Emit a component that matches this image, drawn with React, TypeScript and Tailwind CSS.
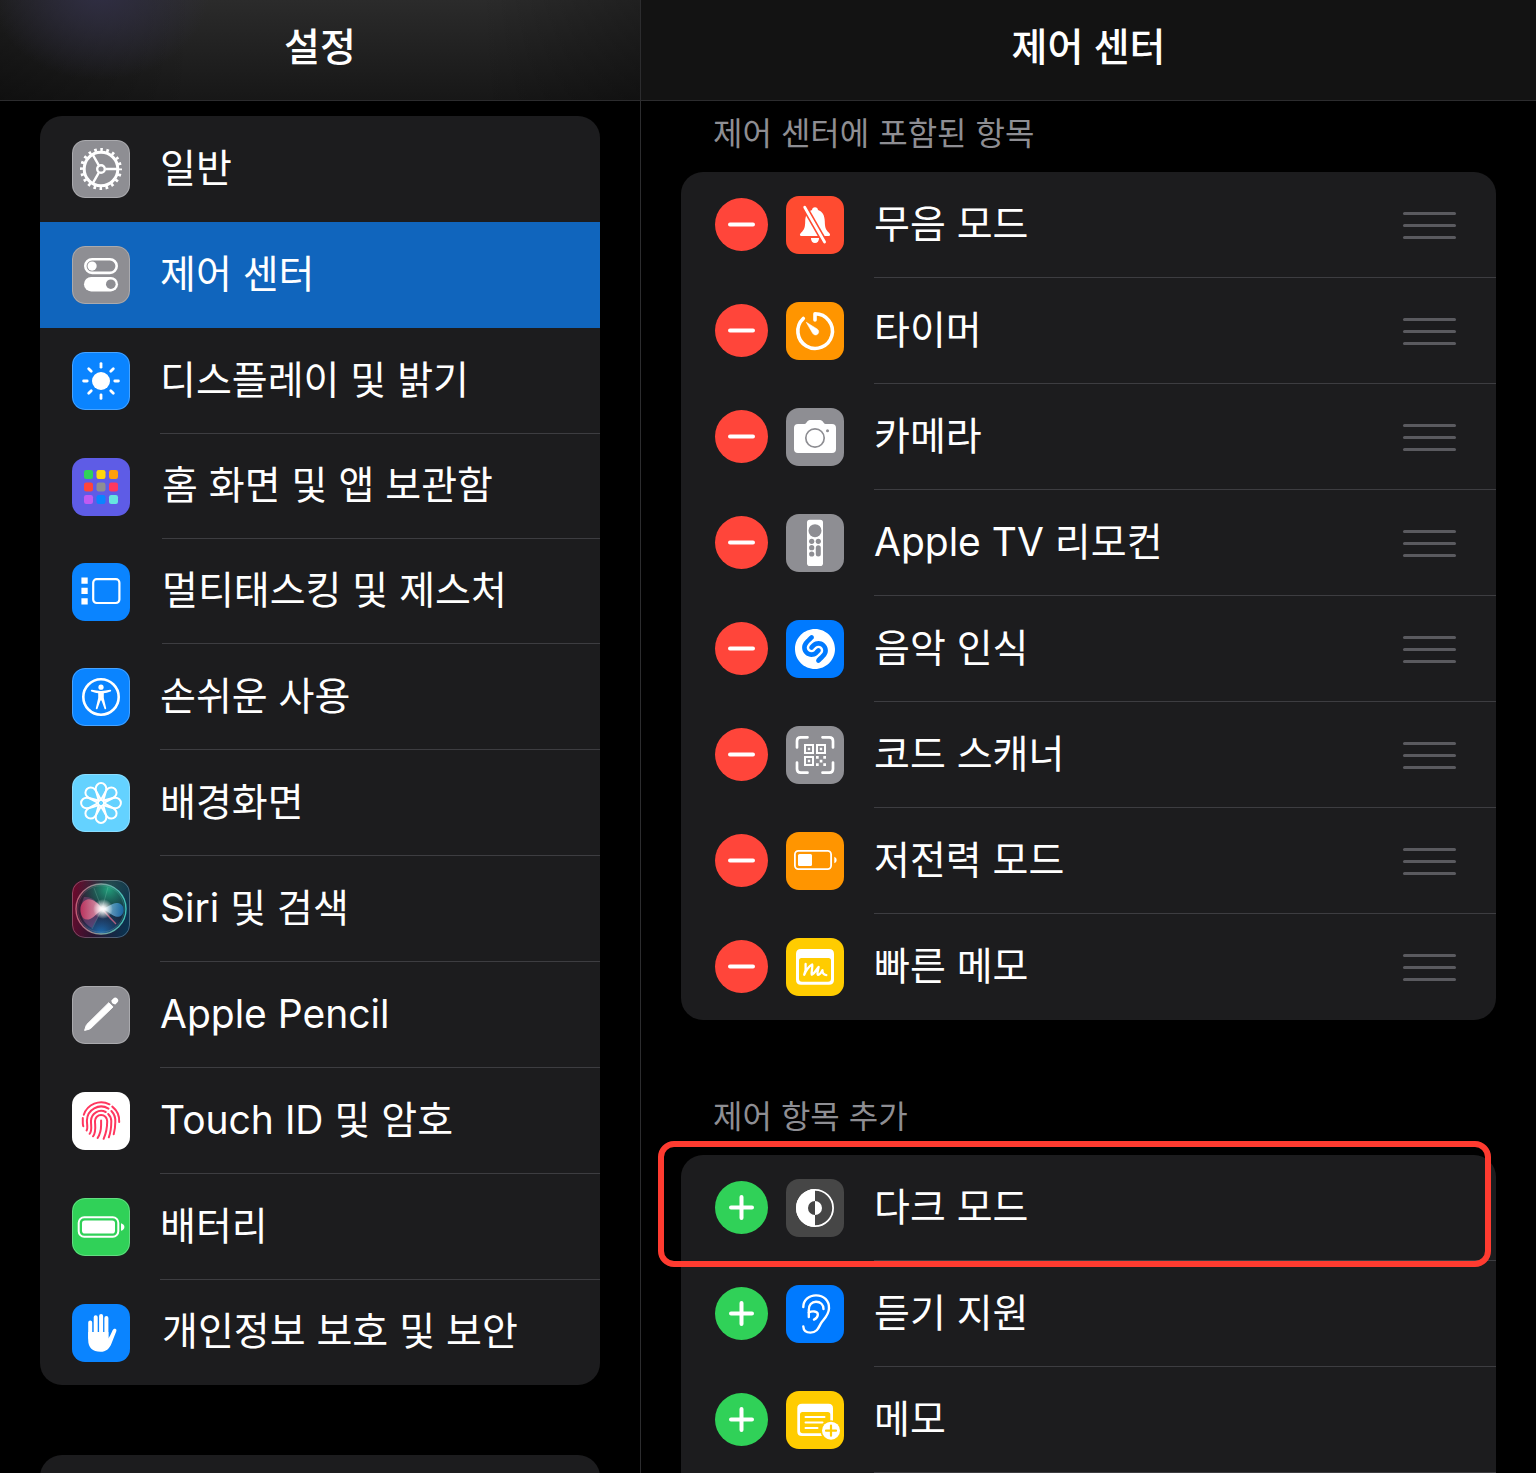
import clsx from "clsx"
import { ReactNode } from "react"
import { SiShazam } from "react-icons/si"

type Item = {
  title: string
  icon: ReactNode
  color: string
}

const Glyph = ({ children }: { children: ReactNode }) => (
  <svg viewBox="0 0 58 58" className="size-full" fill="none" aria-hidden="true">
    {children}
  </svg>
)

const GearIcon = () => (
  <Glyph>
    <g stroke="#fff">
      <circle cx="29" cy="29" r="16.8" strokeWidth="3" />
      <circle
        cx="29"
        cy="29"
        r="19.4"
        strokeWidth="3.2"
        strokeDasharray="2.6 3.495"
        strokeDashoffset="1.3"
      />
      <circle cx="29" cy="29" r="3.8" strokeWidth="2.4" />
      <path
        d="M33.5 29H45M26.7 25.1L21 15.2M26.7 32.9L21 42.8"
        strokeWidth="2.4"
      />
    </g>
  </Glyph>
)

const SwitchesIcon = () => (
  <Glyph>
    <rect x="13.3" y="13.3" width="31.4" height="13.6" rx="6.8" stroke="#fff" strokeWidth="2.6" />
    <circle cx="20.1" cy="20.1" r="4.6" fill="#fff" />
    <rect x="12" y="31" width="34" height="14.4" rx="7.2" fill="#fff" />
    <circle cx="38.8" cy="38.2" r="4.8" fill="#8e8e93" />
  </Glyph>
)

const SunIcon = () => (
  <Glyph>
    <circle cx="29" cy="29" r="9" fill="#fff" />
    <g stroke="#fff" strokeWidth="2.8" strokeLinecap="round">
      {[0, 45, 90, 135, 180, 225, 270, 315].map((angle) => (
        <path key={angle} d="M29 15.2V11.6" transform={`rotate(${angle} 29 29)`} />
      ))}
    </g>
  </Glyph>
)

const gridColors = [
  "#30d158", "#ffd60a", "#ff9f0a",
  "#ff453a", "#8e8e93", "#ff375f",
  "#bf5af2", "#0a84ff", "#66e5e0",
]

const HomeGridIcon = () => (
  <Glyph>
    {gridColors.map((color, i) => (
      <rect
        key={color}
        x={12 + (i % 3) * 12.5}
        y={12 + Math.floor(i / 3) * 12.5}
        width="9"
        height="9"
        rx="2.2"
        fill={color}
      />
    ))}
  </Glyph>
)

const MultitaskIcon = () => (
  <Glyph>
    <path d="M9.4 14.4h6.3v6.3H9.4zM9.4 24.8h6.3v6.3H9.4zM9.4 35.3h6.3v6.3H9.4z" fill="#fff" />
    <rect x="21.2" y="16.2" width="26.2" height="23.8" rx="3.5" stroke="#fff" strokeWidth="2.2" />
  </Glyph>
)

const AccessibilityIcon = () => (
  <Glyph>
    <circle cx="29" cy="29" r="17.7" stroke="#fff" strokeWidth="2.6" />
    <circle cx="29" cy="19.2" r="2.6" fill="#fff" />
    <path
      d="M20 21.8Q29 24 38 21.8a.9.9 0 0 1 .5 1.8Q34.5 25 31.8 25.3V30L34.2 40.2a.9.9 0 0 1-1.7.5L29.5 32.5h-1L25.5 40.7a.9.9 0 0 1-1.7-.5L26.2 30V25.3Q23.5 25 19.5 23.6a.9.9 0 0 1 .5-1.8Z"
      fill="#fff"
    />
  </Glyph>
)

const FlowerIcon = () => (
  <Glyph>
    <g stroke="#fff" strokeWidth="2">
      {[0, 45, 90, 135, 180, 225, 270, 315].map((angle) => (
        <path
          key={angle}
          d="M26.8 27.6C26 22 23.7 18.5 23.7 14.6a5.3 5.5 0 0 1 10.6 0C34.3 18.5 32 22 31.2 27.6"
          transform={`rotate(${angle} 29 29)`}
        />
      ))}
      <circle cx="29" cy="29" r="3" strokeWidth="1.6" />
    </g>
  </Glyph>
)

const SiriIcon = () => (
  <Glyph>
    <defs>
      <linearGradient id="siri-bg" x1="0" y1=".4" x2="1" y2=".6">
        <stop offset="0" stopColor="#6a0a2c" />
        <stop offset=".45" stopColor="#2a1430" />
        <stop offset="1" stopColor="#0a3350" />
      </linearGradient>
      <radialGradient id="siri-green" cx=".65" cy=".1" r=".6">
        <stop offset="0" stopColor="#23a07c" />
        <stop offset="1" stopColor="#0f5a50" stopOpacity="0" />
      </radialGradient>
      <radialGradient id="siri-blue" cx=".5" cy="1" r=".5">
        <stop offset="0" stopColor="#1c6fb5" />
        <stop offset="1" stopColor="#1c4f85" stopOpacity="0" />
      </radialGradient>
      <linearGradient id="siri-ring" x1="0" y1=".5" x2="1" y2=".5">
        <stop offset="0" stopColor="#c05a74" />
        <stop offset=".5" stopColor="#7f9f9c" />
        <stop offset="1" stopColor="#3fc3b8" />
      </linearGradient>
      <linearGradient id="siri-pink" x1="0" y1="0" x2="1" y2="0">
        <stop offset="0" stopColor="#d8345f" />
        <stop offset="1" stopColor="#ffc4d2" />
      </linearGradient>
      <linearGradient id="siri-sky" x1="0" y1="0" x2="1" y2="0">
        <stop offset="0" stopColor="#c4f1ff" />
        <stop offset="1" stopColor="#1778c8" />
      </linearGradient>
      <radialGradient id="siri-glow">
        <stop offset="0" stopColor="#fff" />
        <stop offset=".25" stopColor="#fff" stopOpacity=".9" />
        <stop offset="1" stopColor="#fff" stopOpacity="0" />
      </radialGradient>
    </defs>
    <rect width="58" height="58" fill="url(#siri-bg)" />
    <rect width="58" height="58" fill="url(#siri-green)" opacity=".4" />
    <circle cx="29" cy="29" r="25" fill="#1b2a3c" fillOpacity=".5" />
    <circle cx="29" cy="29" r="25" fill="url(#siri-green)" />
    <circle cx="29" cy="29" r="25" fill="url(#siri-blue)" />
    <path d="M12 17C20 16 26 22 30 29C26 38 22 44 20 48C12 44 8 36 8.5 27Z" fill="#8a4a80" opacity=".5" />
    <path
      d="M31 29C25 22 20 18 15 19.5C9 21.5 7.5 28 9 34C11 41 17 41 22 36.5C25 34 28 31 31 29Z"
      fill="url(#siri-pink)"
      opacity=".75"
    />
    <path
      d="M30 29C37 27 40 22.5 45.5 23C50 23.5 52 27 51.5 31C51 35.5 47.5 37.5 43.5 36.5C39 35 36 31 30 29Z"
      fill="url(#siri-sky)"
      opacity=".7"
    />
    <path d="M31 30L44 44L38 38Z" stroke="#d06a8a" strokeWidth="1.2" opacity=".8" />
    <path d="M30 29L22 8M30 29L36 7M30 29L20 49" stroke="#9fe0d0" strokeWidth=".6" opacity=".35" />
    <circle cx="31" cy="29" r="10" fill="url(#siri-glow)" />
    <circle cx="29" cy="29" r="25" stroke="url(#siri-ring)" strokeWidth="1.4" />
    <circle cx="29" cy="29" r="23.3" stroke="url(#siri-ring)" strokeWidth=".5" opacity=".6" />
  </Glyph>
)

const PencilIcon = () => (
  <Glyph>
    <path
      d="M12.6 44.4L14.2 39.6Q14.5 38.9 15 38.3L36.8 16.7L41 20.9L18.8 42.3Q18.2 42.8 17.5 43.1Z"
      fill="#fff"
      stroke="#fff"
      strokeWidth="1"
      strokeLinejoin="round"
    />
    <path d="M39.3 14.4L41.3 12.4a2.8 2.8 0 0 1 4 4L43.3 18.4L41.7 18Q39.9 17.5 39.6 16Z" fill="#fff" />
  </Glyph>
)

const FingerprintIcon = () => (
  <Glyph>
    <g stroke="#ff375f" strokeWidth="2" strokeLinecap="round">
      <path d="M10.8 26V31.5Q10.900 33 11.300 34.300" />
      <path d="M11.800 22.800A18.300 18.300 0 0 1 37.500 12.300" />
      <path d="M40.300 14.600A18.300 18.300 0 0 1 47.200 30" />
      <path d="M14.600 38.500C16.200 36 14.800 32 14.900 28.500A14.200 14.200 0 0 1 36.500 16.600" />
      <path d="M39.400 19A14.300 14.300 0 0 1 43.300 30C43.300 34.500 42.900 38 41.700 42.300" />
      <path d="M17.600 41.800C20.600 38.500 18.700 32.500 19 28.800A10.200 10.200 0 0 1 33.700 20" />
      <path d="M36.200 22A10.200 10.200 0 0 1 39.300 29C39.300 35 38.800 40 36.800 45.300" />
      <path d="M21 44.300C24.700 40 22.900 33 23 29A6.100 6.100 0 0 1 35.200 29C35.200 36 34.500 40.500 31.600 46.800" />
      <path d="M29.100 28.500V33C29.100 38 28.200 42 25.600 46" />
    </g>
  </Glyph>
)

const BatteryIcon = () => (
  <Glyph>
    <rect x="6.7" y="19.3" width="39.6" height="19.4" rx="5.5" stroke="#fff" strokeWidth="2" />
    <rect x="10" y="22.6" width="33" height="13" rx="2.8" fill="#fff" />
    <path d="M49 25.2Q52.4 26.3 52.4 29T49 32.8Z" fill="#fff" />
  </Glyph>
)

const HandIcon = () => (
  <Glyph>
    <path
      d="M18.2 18.500V34M23.7 13.2V32M29.1 12V32M34.4 14V34"
      stroke="#fff"
      strokeWidth="4"
      strokeLinecap="round"
    />
    <path
      d="M16.2 28H36.4V34.5C37.5 33 39 30 40.5 26.5C41.3 24.8 42.3 24.5 43.3 24.8C44.5 25.2 44.7 26.3 44.2 27.6L39.5 39.5C37.3 45 34 47.8 28.5 47.8C20.5 47.8 16.2 43.5 16.2 36Z"
      fill="#fff"
    />
  </Glyph>
)

const BellSlashIcon = () => (
  <Glyph>
    <path
      d="M29 11.3C27.3 11.3 26.2 12.4 26 14C21.5 15.5 19.3 19.5 19.2 25.5C19.1 31.5 18.3 33.8 15 36.7C13.4 38.2 13.5 40 15.5 40H42.5C44.5 40 44.6 38.2 43 36.7C39.7 33.8 38.9 31.5 38.8 25.5C38.7 19.5 36.5 15.5 32 14C31.8 12.4 30.7 11.3 29 11.3ZM24.9 41.9H33.1C33 45 31.5 47 29 47S25 45 24.9 41.9Z"
      fill="#fff"
    />
    <path d="M18.7 11.3L38.6 46" stroke="#ff4b30" strokeWidth="6" />
    <path d="M18.7 11.3L38.6 46" stroke="#fff" strokeWidth="2.8" strokeLinecap="round" />
  </Glyph>
)

const TimerIcon = () => (
  <Glyph>
    <path
      d="M29 18V11.8A17.3 17.3 0 1 1 17.3 16.5"
      stroke="#fff"
      strokeWidth="3.6"
      strokeLinecap="round"
      strokeLinejoin="round"
    />
    <path d="M20.3 20.3L31 26.9A3.2 3.2 0 1 1 26.7 31.3Z" fill="#fff" stroke="#fff" strokeWidth=".6" strokeLinejoin="round" />
  </Glyph>
)

const CameraIcon = () => (
  <Glyph>
    <path
      d="M12 16H18.5C20.5 16 21 12 24 12H34C37 12 37.5 16 39.5 16H46Q50 16 50 20V41Q50 45 46 45H12Q8 45 8 41V20Q8 16 12 16Z"
      fill="#fff"
    />
    <circle cx="29" cy="30" r="9.2" stroke="#8e8e93" strokeWidth="1.7" />
    <circle cx="41.5" cy="22.7" r="1.5" fill="#8e8e93" />
  </Glyph>
)

const RemoteIcon = () => (
  <Glyph>
    <rect x="21" y="5.8" width="16" height="46.2" rx="2.8" fill="#fff" />
    <g fill="#8e8e93">
      <circle cx="29" cy="16.7" r="6.5" />
      <circle cx="25.7" cy="27.3" r="2.6" />
      <circle cx="32.3" cy="27.3" r="2.6" />
      <circle cx="25.7" cy="33.7" r="2.6" />
      <circle cx="25.7" cy="40" r="2.6" />
      <rect x="29.8" y="31.2" width="5" height="11.4" rx="2.5" />
    </g>
  </Glyph>
)

const ShazamIcon = () => <SiShazam className="size-10 text-white" />

const ScannerIcon = () => (
  <Glyph>
    <path
      d="M11 21.5V15Q11 11.3 14.7 11.3H21.5M36.5 11.3H43.3Q47 11.3 47 15V21.5M47 36.5V43Q47 46.7 43.3 46.7H36.5M21.5 46.7H14.7Q11 46.7 11 43V36.5"
      stroke="#fff"
      strokeWidth="2.7"
      strokeLinecap="round"
    />
    <path d="M19 19h8v8h-8zM31 19h8v8h-8zM19 31h8v8h-8z" stroke="#fff" strokeWidth="2" />
    <path
      d="M21.8 21.8h2.4v2.4h-2.4zM33.8 21.8h2.4v2.4h-2.4zM21.8 33.8h2.4v2.4h-2.4zM30 30h2.7v2.7h-2.7zM37.3 30H40v2.7h-2.7zM33.7 33.7h2.7v2.7h-2.7zM30 37.3h2.7V40h-2.7zM37.3 37.3H40V40h-2.7z"
      fill="#fff"
    />
  </Glyph>
)

const LowPowerIcon = () => (
  <Glyph>
    <rect x="8.9" y="18.9" width="36.2" height="18.2" rx="3.5" stroke="#fff" strokeWidth="1.8" />
    <rect x="12" y="22" width="14" height="12" rx="1.5" fill="#fff" />
    <path d="M48.3 24.7Q50.7 25.5 50.7 28T48.3 31.3Z" fill="#fff" />
  </Glyph>
)

const QuickNoteIcon = () => (
  <Glyph>
    <path
      d="M15 11H43Q48 11 48 16V41.7Q48 46.7 43 46.7H15Q10 46.7 10 41.7V16Q10 11 15 11ZM15.5 20Q13 20 13 22.5V40.5Q13 43.7 16 43.7H42Q45 43.7 45 40.5V22.5Q45 20 42.5 20Z"
      fill="#fff"
      fillRule="evenodd"
    />
    <path
      d="M19.6 25.8C20 29.500 19.6 33.500 18.2 36.8C20 32.500 22.8 28.4 26.2 26.500C27 29.500 25 33.500 25.8 36.6C28.500 35.500 30.500 31.500 32.6 29C32.2 31.500 30.8 35 31.8 36.8C33.500 37.3 35 34.500 36.500 32.2C36.2 34.500 37.3 37 40.3 37.2"
      stroke="#fff"
      strokeWidth="2.3"
      strokeLinecap="round"
      strokeLinejoin="round"
    />
  </Glyph>
)

const DarkModeIcon = () => (
  <Glyph>
    <circle cx="29" cy="29" r="18.1" stroke="#fff" strokeWidth="1.8" />
    <path d="M29 10A19 19 0 0 0 29 48V36A7 7 0 0 1 29 22Z" fill="#fff" />
    <path d="M29 22A7 7 0 0 1 29 36Z" fill="#fff" />
  </Glyph>
)

const EarIcon = () => (
  <Glyph>
    <g stroke="#fff" strokeWidth="2.4" strokeLinecap="round" strokeLinejoin="round">
      <path d="M17.3 22C17.3 15.2 22.8 10.4 30 10.4C37.7 10.4 43.3 15.5 43 23.5C42.8 29.5 39 33 35.5 37.5C33 41 32 47.6 24.5 47.6C20.5 47.6 17.5 45.5 17.3 41.5" />
      <path d="M22.8 32V25C22.5 20 25.8 16.8 30 16.8C34.5 16.8 37.5 19.8 37.5 24" />
      <path d="M22.8 27.5C26 25.8 31.5 26 31.8 29C32 31.5 30.5 33.3 28 34.6" />
    </g>
  </Glyph>
)

const NotesIcon = () => (
  <Glyph>
    <path
      d="M16 12.7H42.5Q47 12.7 47 17.2V40Q47 45 42 45H16Q11.3 45 11.3 40.5V17.2Q11.3 12.7 16 12.7ZM16.5 21Q14 21 14 23.5V39.5Q14 42.3 16.8 42.3H41.5Q44.3 42.3 44.3 39.5V23.5Q44.3 21 41.8 21Z"
      fill="#fff"
      fillRule="evenodd"
    />
    <path d="M19.5 26H38.5M19.5 31.5H36.5M19.5 37H31.5" stroke="#fff" strokeWidth="2" strokeLinecap="round" />
    <circle cx="45" cy="39.7" r="10.5" fill="#ffcc00" />
    <circle cx="45" cy="39.7" r="9" fill="#fff" />
    <path d="M45 34.7V44.7M40 39.7H50" stroke="#ffcc00" strokeWidth="2.2" strokeLinecap="round" />
  </Glyph>
)

const menu: (Item & { outlined?: boolean; short?: boolean; active?: boolean })[] = [
  { title: "일반", icon: <GearIcon />, color: "bg-[#8e8e93]", outlined: true },
  { title: "제어 센터", icon: <SwitchesIcon />, color: "bg-[#8e8e93]", outlined: true, active: true },
  { title: "디스플레이 및 밝기", icon: <SunIcon />, color: "bg-[#0a84ff]", outlined: true },
  { title: "홈 화면 및 앱 보관함", icon: <HomeGridIcon />, color: "bg-[#5e5ce6]", short: true },
  { title: "멀티태스킹 및 제스처", icon: <MultitaskIcon />, color: "bg-[#0a84ff]", short: true },
  { title: "손쉬운 사용", icon: <AccessibilityIcon />, color: "bg-[#0a84ff]", outlined: true },
  { title: "배경화면", icon: <FlowerIcon />, color: "bg-[#64d2ff]", outlined: true },
  { title: "Siri 및 검색", icon: <SiriIcon />, color: "bg-[#2a1430]", outlined: true },
  { title: "Apple Pencil", icon: <PencilIcon />, color: "bg-[#8e8e93]", outlined: true },
  { title: "Touch ID 및 암호", icon: <FingerprintIcon />, color: "bg-white" },
  { title: "배터리", icon: <BatteryIcon />, color: "bg-[#30d158]", outlined: true },
  { title: "개인정보 보호 및 보안", icon: <HandIcon />, color: "bg-[#0a84ff]", short: true },
]

const included: Item[] = [
  { title: "무음 모드", icon: <BellSlashIcon />, color: "bg-[#ff4b30]" },
  { title: "타이머", icon: <TimerIcon />, color: "bg-[#ff9500]" },
  { title: "카메라", icon: <CameraIcon />, color: "bg-[#8e8e93]" },
  { title: "Apple TV 리모컨", icon: <RemoteIcon />, color: "bg-[#8e8e93]" },
  { title: "음악 인식", icon: <ShazamIcon />, color: "bg-[#007aff]" },
  { title: "코드 스캐너", icon: <ScannerIcon />, color: "bg-[#8e8e93]" },
  { title: "저전력 모드", icon: <LowPowerIcon />, color: "bg-[#ff9500]" },
  { title: "빠른 메모", icon: <QuickNoteIcon />, color: "bg-[#ffcc00]" },
]

const available: Item[] = [
  { title: "다크 모드", icon: <DarkModeIcon />, color: "bg-[#464646]" },
  { title: "듣기 지원", icon: <EarIcon />, color: "bg-[#007aff]" },
  { title: "메모", icon: <NotesIcon />, color: "bg-[#ffcc00]" },
]

function Tile({ icon, color, outlined }: { icon: ReactNode; color: string; outlined?: boolean }) {
  return (
    <span
      className={clsx(
        "relative flex size-[58px] shrink-0 items-center justify-center overflow-hidden rounded-[13px]",
        color
      )}
    >
      {icon}
      {outlined && (
        <span className="absolute inset-0 rounded-[13px] border border-white/25" />
      )}
    </span>
  )
}

function Title({ children }: { children: string }) {
  return <span className="truncate pb-0.5 text-[39px] leading-[56px]">{children}</span>
}

function PanelHeader({ title, className }: { title: string; className: string }) {
  return (
    <header
      className={clsx(
        "flex h-[101px] shrink-0 items-center justify-center border-b border-[#2c2c2e] pb-1.5",
        className
      )}
    >
      <h1 className="text-[39px] leading-[56px] font-medium">{title}</h1>
    </header>
  )
}

function ControlRow({ item, mode, last }: { item: Item; mode: "remove" | "add"; last: boolean }) {
  return (
    <li className="flex h-[106px] items-center pl-[34px]">
      <button
        type="button"
        aria-label={`${item.title} ${mode === "remove" ? "제거" : "추가"}`}
        className={clsx(
          "mr-[18px] mb-0.5 flex size-[53px] shrink-0 items-center justify-center rounded-full",
          mode === "remove" ? "bg-[#ff453a]" : "bg-[#30d158]"
        )}
      >
        <svg viewBox="0 0 53 53" className="size-full" aria-hidden="true">
          <path
            d={mode === "remove" ? "M15 26.5H38" : "M16 26.5H37M26.5 16V37"}
            stroke="#fff"
            strokeWidth="4"
            strokeLinecap="round"
          />
        </svg>
      </button>
      <Tile icon={item.icon} color={item.color} />
      <div
        className={clsx(
          "ml-[30px] flex h-full min-w-0 flex-1 items-center justify-between border-b pr-10",
          last ? "border-transparent" : "border-[#3d3d41]"
        )}
      >
        <Title>{item.title}</Title>
        {mode === "remove" && (
          <button
            type="button"
            aria-label={`${item.title} 순서 변경`}
            className="mt-0.5 flex w-[53px] shrink-0 flex-col gap-[9px]"
          >
            <span className="h-[3px] rounded-full bg-[#5a5a5f]" />
            <span className="h-[3px] rounded-full bg-[#5a5a5f]" />
            <span className="h-[3px] rounded-full bg-[#5a5a5f]" />
          </button>
        )}
      </div>
    </li>
  )
}

export default function App() {
  return (
    <div className="flex h-screen overflow-hidden bg-black font-['Inter','Noto_Sans_CJK_KR',sans-serif] text-white">
      <aside className="flex w-5/12 flex-col overflow-hidden">
        <PanelHeader
          title="설정"
          className="bg-[radial-gradient(ellipse_110px_90px_at_100px_-10px,#302e44_0%,transparent_100%),linear-gradient(to_right,#0005,transparent_30%,transparent_75%,#0004),linear-gradient(#2b2b2b,#171717)]"
        />
        <nav className="px-10 pt-[15px]">
          <ul className="rounded-[22px] bg-[#1c1c1e]">
            {menu.map((item, i) => (
              <li key={item.title}>
                <a
                  href="#"
                  aria-current={item.active ? "page" : undefined}
                  className={clsx(
                    "flex items-center pl-8",
                    item.short ? "h-[105px]" : "h-[106px]",
                    item.active && "bg-[#1065bd]"
                  )}
                >
                  <Tile icon={item.icon} color={item.color} outlined={item.outlined} />
                  <span
                    className={clsx(
                      "flex h-full min-w-0 flex-1 items-center border-b",
                      item.short ? "ml-8" : "ml-[30px]",
                      i < 2 || i === menu.length - 1 ? "border-transparent" : "border-[#3d3d41]"
                    )}
                  >
                    <Title>{item.title}</Title>
                  </span>
                </a>
              </li>
            ))}
          </ul>
          <ul className="mt-[70px] h-[106px] rounded-[22px] bg-[#1c1c1e]" />
        </nav>
      </aside>

      <main className="flex min-w-0 flex-1 flex-col overflow-hidden border-l border-[#2c2c2e]">
        <PanelHeader title="제어 센터" className="bg-[#131313]" />
        <div className="px-10 pt-[9px]">
          <section>
            <h2 className="px-8 pb-[14px] text-[32px] leading-[48px] text-[#8e8e93]">
              제어 센터에 포함된 항목
            </h2>
            <ul className="rounded-[22px] bg-[#1c1c1e]">
              {included.map((item, i) => (
                <ControlRow
                  key={item.title}
                  item={item}
                  mode="remove"
                  last={i === included.length - 1}
                />
              ))}
            </ul>
          </section>

          <section className="pt-[73px]">
            <h2 className="px-8 pb-[14px] text-[32px] leading-[48px] text-[#8e8e93]">
              제어 항목 추가
            </h2>
            <div className="relative">
              <ul className="rounded-t-[22px] bg-[#1c1c1e]">
                {available.map((item) => (
                  <ControlRow key={item.title} item={item} mode="add" last={false} />
                ))}
              </ul>
              {/* callout around the first control */}
              <div className="pointer-events-none absolute -top-[14px] right-[5px] -left-[23px] h-[126px] rounded-2xl border-6 border-[#ff3b30]" />
            </div>
          </section>
        </div>
      </main>
    </div>
  )
}
